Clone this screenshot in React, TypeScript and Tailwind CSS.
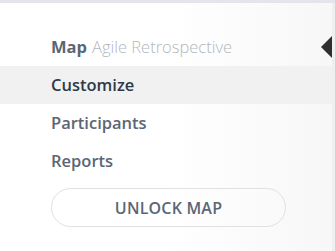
import React from "react";

const items = [
  { label: "Customize", active: true },
  { label: "Participants", active: false },
  { label: "Reports", active: false },
];

export default function App() {
  return (
    <div
      className="w-[335px] h-[251px] overflow-hidden bg-white"
      style={{ fontFamily: '"Open Sans", "Liberation Sans", sans-serif' }}
    >
      {/* top strip */}
      <div className="h-[3px] bg-[#e3e5ea]" />

      <div className="relative h-[248px] bg-gradient-to-r from-white via-white to-[#f7f7f7] border-r-[3px] border-[#efefef]">
        {/* pointer */}
        <svg
          className="absolute right-0 top-[33px]"
          width="11"
          height="22"
          viewBox="0 0 11 22"
        >
          <path d="M11 0L0 11L11 22Z" fill="#2f2f2f" />
        </svg>

        <nav className="pt-[25px]">
          <div className="h-[38px] flex items-center pl-[51px] text-[16.5px]">
            <span className="font-bold text-[#5b6675]">Map</span>
            <span className="ml-[5px] font-light text-[#b3b7bd]">Agile Retrospective</span>
          </div>
          {items.map((it) => (
            <div
              key={it.label}
              className={
                it.active
                  ? "h-[38px] flex items-center pl-[51px] text-[16.5px] font-semibold text-[#2f3947] bg-[#f1f1f1]"
                  : "h-[38px] flex items-center pl-[51px] text-[16.5px] font-semibold text-[#5b6675]"
              }
            >
              {it.label}
            </div>
          ))}
        </nav>

        <div className="pl-[51px] mt-[8px]">
          <button className="w-[235px] h-[39px] rounded-full border border-[#e1e1e1] bg-transparent text-[16px] font-semibold text-[#5b6675] tracking-[0.2px]">
            UNLOCK MAP
          </button>
        </div>
      </div>
    </div>
  );
}
